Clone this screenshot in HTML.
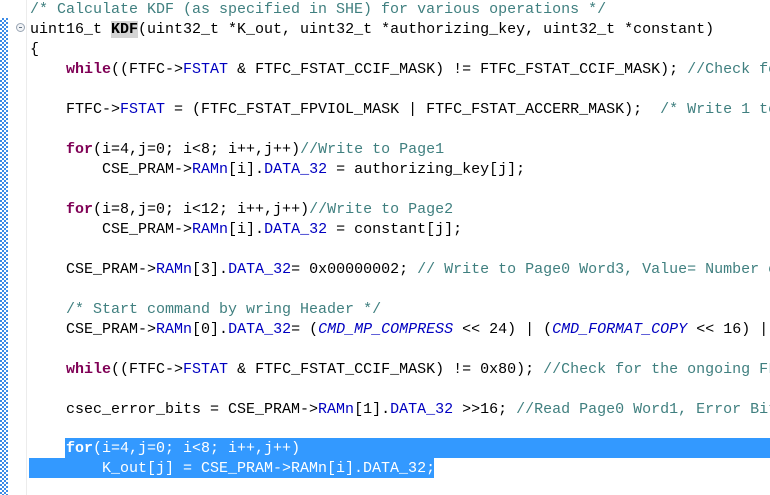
<!DOCTYPE html>
<html><head><meta charset="utf-8"><style>
html,body{margin:0;padding:0;width:770px;height:495px;overflow:hidden;background:#fff}
#w{position:relative;width:770px;height:495px;overflow:hidden}
.g{position:absolute;left:0;top:18px;width:8px;height:477px;background-color:#fff;
background-image:linear-gradient(45deg,#3d8be6 25%,transparent 25%,transparent 75%,#3d8be6 75%),linear-gradient(45deg,#3d8be6 25%,transparent 25%,transparent 75%,#3d8be6 75%);
background-size:4px 4px;background-position:0 0,2px 2px;}
.vl{position:absolute;left:26px;top:0;width:1px;height:495px;background:#ececec}
.fold{position:absolute;left:16px;top:23px;width:9px;height:9px;border:1px solid #9aa6b4;border-radius:50%;box-sizing:border-box;background:#f2f4f7}
.fold:after{content:"";position:absolute;left:2px;top:3px;width:3px;height:1px;background:#60707f}
.l{position:absolute;left:30px;height:20px;line-height:20px;font-family:"Liberation Mono",monospace;font-size:15px;white-space:pre;color:#000}
.c{color:#3f7f7f}.k{color:#7f0055;font-weight:bold}.b{color:#0000c0}.i{color:#0000c0;font-style:italic}
.hl{background:#d4d4d4;font-weight:bold}
.sel{position:absolute;background:#3399ff}
.w{color:#fff}
</style></head><body><div id="w">
<div class="g"></div><div class="vl"></div><div class="fold"></div>
<div class="sel" style="left:65px;top:438px;width:705px;height:20px"></div>
<div class="sel" style="left:29px;top:458px;width:405px;height:20px"></div>
<div class="l" style="top:0px"><span class="c">/* Calculate KDF (as specified in SHE) for various operations */</span></div>
<div class="l" style="top:20px">uint16_t <span class="hl">KDF</span>(uint32_t *K_out, uint32_t *authorizing_key, uint32_t *constant)</div>
<div class="l" style="top:40px">{</div>
<div class="l" style="top:60px">    <span class="k">while</span>((FTFC-&gt;<span class="b">FSTAT</span> &amp; FTFC_FSTAT_CCIF_MASK) != FTFC_FSTAT_CCIF_MASK); <span class="c">//Check for the ongoing</span></div>
<div class="l" style="top:100px">    FTFC-&gt;<span class="b">FSTAT</span> = (FTFC_FSTAT_FPVIOL_MASK | FTFC_FSTAT_ACCERR_MASK);  <span class="c">/* Write 1 to clear */</span></div>
<div class="l" style="top:140px">    <span class="k">for</span>(i=4,j=0; i&lt;8; i++,j++)<span class="c">//Write to Page1</span></div>
<div class="l" style="top:160px">        CSE_PRAM-&gt;<span class="b">RAMn</span>[i].<span class="b">DATA_32</span> = authorizing_key[j];</div>
<div class="l" style="top:200px">    <span class="k">for</span>(i=8,j=0; i&lt;12; i++,j++)<span class="c">//Write to Page2</span></div>
<div class="l" style="top:220px">        CSE_PRAM-&gt;<span class="b">RAMn</span>[i].<span class="b">DATA_32</span> = constant[j];</div>
<div class="l" style="top:260px">    CSE_PRAM-&gt;<span class="b">RAMn</span>[3].<span class="b">DATA_32</span>= 0x00000002; <span class="c">// Write to Page0 Word3, Value= Number of</span></div>
<div class="l" style="top:300px">    <span class="c">/* Start command by wring Header */</span></div>
<div class="l" style="top:320px">    CSE_PRAM-&gt;<span class="b">RAMn</span>[0].<span class="b">DATA_32</span>= (<span class="i">CMD_MP_COMPRESS</span> &lt;&lt; 24) | (<span class="i">CMD_FORMAT_COPY</span> &lt;&lt; 16) | (</div>
<div class="l" style="top:360px">    <span class="k">while</span>((FTFC-&gt;<span class="b">FSTAT</span> &amp; FTFC_FSTAT_CCIF_MASK) != 0x80); <span class="c">//Check for the ongoing FLASH</span></div>
<div class="l" style="top:400px">    csec_error_bits = CSE_PRAM-&gt;<span class="b">RAMn</span>[1].<span class="b">DATA_32</span> &gt;&gt;16; <span class="c">//Read Page0 Word1, Error Bits</span></div>
<div class="l w" style="top:439px">    <b>for</b>(i=4,j=0; i&lt;8; i++,j++)</div>
<div class="l w" style="top:459px">        K_out[j] = CSE_PRAM-&gt;RAMn[i].DATA_32;</div>
</div></body></html>
